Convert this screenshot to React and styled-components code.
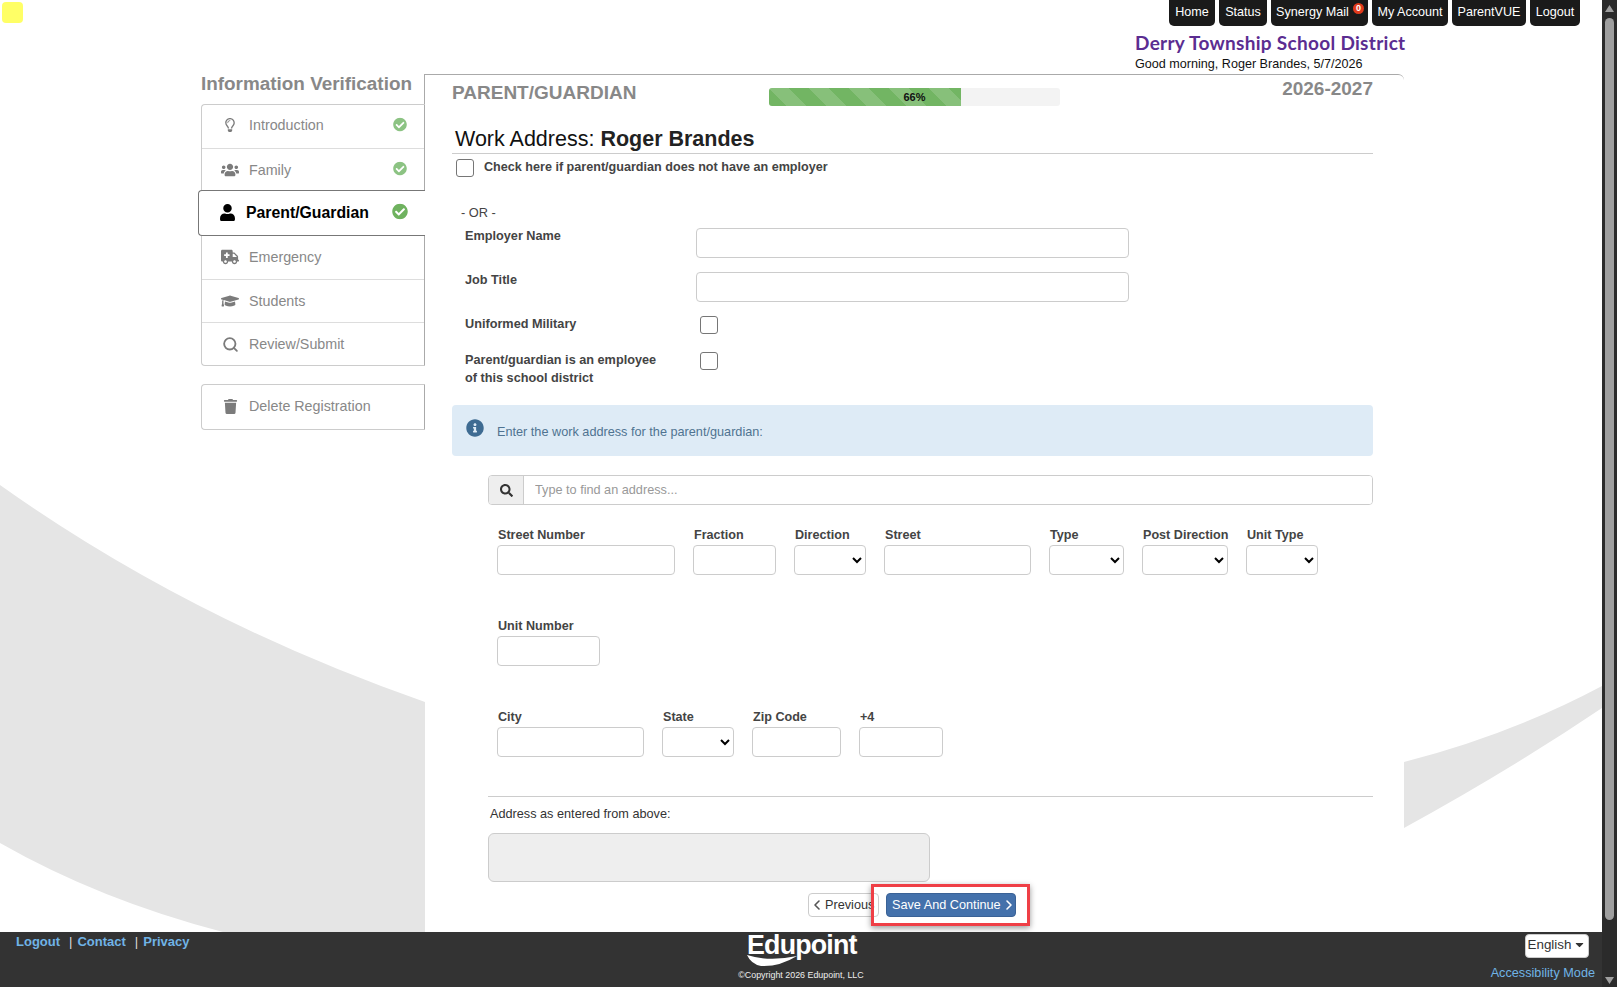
import React from 'react';
import styled, { createGlobalStyle } from 'styled-components';
import {
  FaRegLightbulb,
  FaUsers,
  FaUser,
  FaAmbulance,
  FaGraduationCap,
  FaTrash,
  FaInfoCircle,
  FaCheckCircle,
  FaSearch,
  FaCaretDown,
} from 'react-icons/fa';
import { LuSearch, LuChevronLeft, LuChevronRight } from 'react-icons/lu';

const GlobalStyle = createGlobalStyle`
  html, body {
    margin: 0;
    padding: 0;
    height: 100%;
    overflow: hidden;
    background: #fff;
    font-family: 'Liberation Sans', Arial, sans-serif;
  }
  * { box-sizing: border-box; }
`;

const Shell = styled.div`
  position: relative;
  display: flex;
  width: 1617px;
  height: 987px;
  overflow: hidden;
`;

const Viewport = styled.div`
  position: relative;
  display: flex;
  flex-direction: column;
  width: 1602px;
  height: 987px;
`;

const Swoosh = styled.svg`
  position: absolute;
  inset: 0;
  width: 1602px;
  height: 987px;
`;

const YellowTag = styled.div`
  position: absolute;
  left: 2px;
  top: 2px;
  width: 21px;
  height: 21px;
  background: #ffff66;
  border-radius: 4px;
`;

const TopNav = styled.nav`
  position: relative;
  display: flex;
  justify-content: flex-end;
  gap: 4px;
  height: 26px;
  padding-right: 22px;
`;

const NavButton = styled.a`
  position: relative;
  display: flex;
  align-items: center;
  justify-content: center;
  width: ${(p) => p.$w}px;
  height: 26px;
  padding-bottom: 3px;
  padding-right: ${(p) => (p.$badged ? 14 : 0)}px;
  background: #1a1a1a;
  border-radius: 0 0 5px 5px;
  color: #fff;
  font-size: 12.6px;
`;

const MailBadge = styled.span`
  position: absolute;
  right: 4px;
  top: 3px;
  width: 11px;
  height: 11px;
  border-radius: 50%;
  background: #e03a1c;
  color: #fff;
  font-size: 9px;
  font-weight: bold;
  line-height: 11px;
  text-align: center;
`;

const SchoolBlock = styled.header`
  position: relative;
  height: 48px;
  padding-left: 1135px;
`;

const District = styled.div`
  height: 29px;
  padding-top: 5px;
  color: #5b2d91;
  font-family: 'Lato', 'Liberation Sans', sans-serif;
  font-size: 19px;
  font-weight: 700;
  line-height: 24px;
  letter-spacing: 0.3px;
  white-space: nowrap;
`;

const Greeting = styled.div`
  margin-top: 1px;
  color: #111;
  font-size: 12.6px;
  line-height: 16px;
  white-space: nowrap;
`;

const Workspace = styled.div`
  position: relative;
  display: flex;
  flex: 1;
  padding-left: 201px;
  min-height: 0;
`;

const Sidebar = styled.aside`
  flex: none;
  width: 224px;
`;

const SideTitle = styled.div`
  display: flex;
  align-items: flex-end;
  height: 30px;
  padding-bottom: 11px;
  border-right: 1px solid #aaa;
  color: #888;
  font-size: 18.9px;
  font-weight: bold;
  line-height: 19px;
  white-space: nowrap;
`;

const SideList = styled.div`
  background: #fff;
  border: 1px solid #ccc;
  border-right-color: #aaa;
  border-radius: 4px 0 0 4px;
`;

const SideItem = styled.a`
  position: relative;
  display: flex;
  align-items: center;
  height: ${(p) => p.$h || 43}px;
  padding-left: 17px;
  padding-bottom: ${(p) => p.$lift || 0}px;
  color: #888;
  font-size: 14.3px;
  & + & {
    border-top: 1px solid #ddd;
  }
`;

const ActiveItem = styled.a`
  position: relative;
  display: flex;
  align-items: center;
  height: 46px;
  margin: -1px -1px -1px -4px;
  padding-left: 17px;
  padding-bottom: 1px;
  background: #fff;
  border: 1px solid #777;
  border-right: none;
  border-radius: 4px 0 0 4px;
  color: #000;
  font-size: 15.8px;
  font-weight: bold;
  z-index: 1;
`;

const SideIcon = styled.span`
  display: flex;
  justify-content: center;
  width: 22px;
  margin-right: 8px;
  color: ${(p) => (p.$active ? '#000' : '#7b7b7b')};
  font-size: ${(p) => p.$size || 18}px;
`;

const Done = styled.span`
  position: absolute;
  right: 17px;
  top: 50%;
  display: flex;
  transform: translateY(-60%);
  margin-top: ${(p) => (p.$lifted ? -1 : 0)}px;
  color: ${(p) => (p.$active ? '#6fb25f' : '#8cc383')};
  font-size: ${(p) => (p.$active ? 16 : 14)}px;
`;

const DeleteBox = styled(SideList)`
  margin-top: 18px;
`;

const Panel = styled.main`
  position: relative;
  flex: none;
  width: 979px;
  padding: 0 31px 0 27px;
  background: #fff;
  border-top: 1px solid #aaa;
  border-radius: 0 6px 0 0;
`;

const PanelTop = styled.div`
  display: flex;
  height: 46px;
`;

const StepTitle = styled.h2`
  flex: none;
  width: 317px;
  margin: 6px 0 0;
  color: #888;
  font-size: 19px;
  font-weight: bold;
  line-height: 24px;
`;

const ProgressTrack = styled.div`
  flex: none;
  position: relative;
  width: 291px;
  height: 18px;
  margin-top: 13px;
  background: #f3f3f3;
  border-radius: 3px;
  overflow: hidden;
`;

const ProgressFill = styled.div`
  height: 100%;
  background-color: #72b563;
  background-image: linear-gradient(
    45deg,
    rgba(255, 255, 255, 0.15) 25%,
    transparent 25%,
    transparent 50%,
    rgba(255, 255, 255, 0.15) 50%,
    rgba(255, 255, 255, 0.15) 75%,
    transparent 75%
  );
  background-size: 40px 40px;
`;

const ProgressText = styled.span`
  position: absolute;
  inset: 0;
  color: #111;
  font-size: 11px;
  font-weight: bold;
  line-height: 19px;
  text-align: center;
`;

const Year = styled.div`
  margin: 2px 0 0 auto;
  color: #888;
  font-size: 19px;
  font-weight: bold;
  line-height: 24px;
`;

const Heading = styled.h1`
  height: 33px;
  margin: 0;
  padding: 5px 0 0 3px;
  border-bottom: 1px solid #ccc;
  color: #111;
  font-size: 21.5px;
  font-weight: normal;
  line-height: 26px;
  b { color: #222; }
`;

const Box = styled.input.attrs({ type: 'checkbox' })`
  appearance: none;
  flex: none;
  width: 18px;
  height: 18px;
  margin: 0;
  background: #fff;
  border: 1px solid #767676;
  border-radius: 3px;
`;

const NoEmployer = styled.label`
  display: flex;
  gap: 10px;
  margin-top: 5px;
  padding-left: 4px;
  color: #444;
  font-size: 12.6px;
  font-weight: bold;
  line-height: 16px;
`;

const OrText = styled.div`
  margin-top: 28px;
  padding-left: 9px;
  color: #444;
  font-size: 12.8px;
  line-height: 16px;
`;

const FormRow = styled.div`
  display: grid;
  grid-template-columns: 231px 433px;
  margin-top: ${(p) => p.$top}px;
  padding-left: 13px;
`;

const RowLabel = styled.label`
  color: #444;
  font-size: 12.7px;
  font-weight: bold;
  line-height: 17.5px;
`;

const TextBox = styled.input`
  display: block;
  width: 100%;
  height: 30px;
  background: #fff;
  border: 1px solid #ccc;
  border-radius: 4px;
`;

const CheckCell = styled.div`
  padding-left: 4px;
`;

const Notice = styled.div`
  display: flex;
  height: 51px;
  margin-top: 18px;
  padding: 15px 0 0 14px;
  background: #deebf6;
  border-radius: 4px;
  color: #4f7391;
  font-size: 12.7px;
  line-height: 24px;
  svg {
    margin: -1px 13px 0 0;
    color: #3e6b92;
    font-size: 18px;
  }
`;

const AddressBlock = styled.div`
  padding-left: 36px;
`;

const SearchBar = styled.div`
  display: flex;
  height: 30px;
  margin-top: 19px;
  background: #fff;
  border: 1px solid #ccc;
  border-radius: 4px;
  overflow: hidden;
`;

const SearchAddon = styled.span`
  display: flex;
  flex: none;
  align-items: center;
  justify-content: center;
  width: 35px;
  background: #eee;
  border-right: 1px solid #ccc;
  color: #333;
  font-size: 13px;
`;

const SearchInput = styled.input`
  flex: 1;
  padding: 0 11px;
  border: none;
  outline: none;
  font-family: inherit;
  font-size: 12.7px;
  &::placeholder { color: #999; }
`;

const AddressRow = styled.div`
  display: flex;
  gap: 18px;
  margin-top: ${(p) => p.$top}px;
  padding-left: 9px;
`;

const Field = styled.div`
  display: flex;
  flex-direction: column;
  width: ${(p) => p.$w}px;
`;

const FieldLabel = styled.label`
  height: 18px;
  padding-left: 1px;
  color: #444;
  font-size: 12.6px;
  font-weight: bold;
  line-height: 17px;
  white-space: nowrap;
`;

const SelectBox = styled.select`
  display: block;
  width: 100%;
  height: 30px;
  background: #fff;
  border: 1px solid #ccc;
  border-radius: 4px;
`;

const Rule = styled.hr`
  height: 1px;
  margin: 39px 0 0;
  background: #ccc;
  border: none;
`;

const EnteredLabel = styled.div`
  margin-top: 9px;
  padding-left: 2px;
  color: #333;
  font-size: 12.7px;
  line-height: 16px;
`;

const Entered = styled.div`
  width: 442px;
  height: 49px;
  margin-top: 11px;
  background: #eee;
  border: 1px solid #ccc;
  border-radius: 6px;
`;

const ButtonRow = styled.div`
  position: relative;
  display: flex;
  gap: 7px;
  margin-top: 11px;
  padding-left: 356px;
`;

const PrevButton = styled.a`
  display: flex;
  align-items: center;
  width: 71px;
  height: 24px;
  background: #fff;
  border: 1px solid #ccc;
  border-radius: 4px;
  color: #333;
  font-size: 12.7px;
  white-space: nowrap;
  svg { flex: none; width: 16px; height: 18px; color: #555; }
`;

const SaveButton = styled.a`
  display: flex;
  align-items: center;
  width: 130px;
  height: 24px;
  padding-left: 5px;
  background: #4471ab;
  border: 1px solid #3a6296;
  border-radius: 4px;
  color: #fff;
  font-size: 12.7px;
  white-space: nowrap;
  svg { flex: none; width: 16px; height: 18px; }
`;

const Callout = styled.div`
  position: absolute;
  left: 419px;
  top: -9px;
  width: 159px;
  height: 42px;
  border: 3px solid #ef3f46;
  box-shadow: 0 2px 6px rgba(0, 0, 0, 0.4);
`;

const Footer = styled.footer`
  position: relative;
  display: grid;
  grid-template-columns: 1fr auto 1fr;
  flex: none;
  height: 55px;
  background: #333;
`;

const FooterLinks = styled.div`
  display: flex;
  padding: 1px 0 0 16px;
  color: #ddd;
  font-size: 13px;
  line-height: 17px;
`;

const FooterLink = styled.a`
  color: #70b3e6;
  font-weight: bold;
`;

const Pipe = styled.span`
  margin: 0 5px 0 9px;
`;

const Brand = styled.div`
  display: flex;
  flex-direction: column;
  align-items: center;
`;

const BrandMark = styled.div`
  position: relative;
  width: 108px;
  height: 35px;
  color: #fff;
  font-size: 26.8px;
  font-weight: bold;
  line-height: 27px;
  letter-spacing: -0.8px;
  white-space: nowrap;
  sup {
    position: absolute;
    right: -1px;
    top: 3px;
    font-size: 6px;
    line-height: 6px;
    letter-spacing: 0;
  }
  svg {
    position: absolute;
    left: 0;
    top: 21px;
    width: 50px;
    height: 14px;
  }
`;

const Copyright = styled.div`
  margin-top: 2px;
  color: #eee;
  font-size: 8.9px;
  line-height: 12px;
  white-space: nowrap;
`;

const FooterRight = styled.div`
  display: flex;
  flex-direction: column;
  align-items: flex-end;
  padding: 2px 7px 0 0;
`;

const LangButton = styled.button`
  display: flex;
  align-items: center;
  justify-content: center;
  width: 64px;
  height: 24px;
  margin-right: 6px;
  padding: 0 0 3px;
  background: #fff;
  border: 1px solid #ccc;
  border-radius: 4px;
  color: #333;
  font-family: inherit;
  font-size: 13.4px;
  svg { margin-left: 2px; font-size: 13px; }
`;

const AccessLink = styled.a`
  margin-top: 7px;
  color: #70b3e6;
  font-size: 12.7px;
  line-height: 16px;
  white-space: nowrap;
`;

const ScrollTrack = styled.div`
  position: relative;
  flex: none;
  width: 15px;
  height: 987px;
  background: #2b2b2b;
`;

const ScrollThumb = styled.div`
  position: absolute;
  left: 3px;
  top: 18px;
  width: 9px;
  height: 902px;
  background: #9f9f9f;
  border-radius: 5px;
`;

const ScrollArrow = styled.svg`
  position: absolute;
  left: 3px;
  ${(p) => (p.$down ? 'bottom: 3px;' : 'top: 5px;')}
  width: 9px;
  height: 7px;
`;

const navItems = [
  ['Home', 46],
  ['Status', 48],
  ['Synergy Mail', 97],
  ['My Account', 76],
  ['ParentVUE', 74],
  ['Logout', 50],
];

const App = () => {
  return (
    <>
      <GlobalStyle />
      <Shell>
        <Viewport>
          <Swoosh viewBox="0 0 1602 987">
            <path d="M0 485 Q190 620 425 702 L425 932 L223 932 Q100 900 0 843 Z" fill="#e5e5e5" />
            <path d="M1404 762 Q1510 735 1602 686 L1602 708 Q1510 770 1404 828 Z" fill="#e5e5e5" />
          </Swoosh>
          <YellowTag />
          <TopNav>
            {navItems.map(([label, w]) => (
              <NavButton key={label} $w={w} $badged={label === 'Synergy Mail'}>
                {label}
                {label === 'Synergy Mail' && <MailBadge>0</MailBadge>}
              </NavButton>
            ))}
          </TopNav>
          <SchoolBlock>
            <District>Derry Township School District</District>
            <Greeting>Good morning, Roger Brandes, 5/7/2026</Greeting>
          </SchoolBlock>
          <Workspace>
            <Sidebar>
              <SideTitle>Information Verification</SideTitle>
              <SideList>
                <SideItem $lift={3}>
                  <SideIcon $size={14}><FaRegLightbulb /></SideIcon>
                  Introduction
                  <Done $lifted><FaCheckCircle /></Done>
                </SideItem>
                <SideItem $lift={1}>
                  <SideIcon><FaUsers /></SideIcon>
                  Family
                  <Done><FaCheckCircle /></Done>
                </SideItem>
                <ActiveItem>
                  <SideIcon $active $size={17}><FaUser /></SideIcon>
                  Parent/Guardian
                  <Done $active><FaCheckCircle /></Done>
                </ActiveItem>
                <SideItem $h={44}>
                  <SideIcon><FaAmbulance /></SideIcon>
                  Emergency
                </SideItem>
                <SideItem>
                  <SideIcon><FaGraduationCap /></SideIcon>
                  Students
                </SideItem>
                <SideItem>
                  <SideIcon $size={17}><LuSearch strokeWidth={2.6} /></SideIcon>
                  Review/Submit
                </SideItem>
              </SideList>
              <DeleteBox>
                <SideItem $h={44} $lift={2}>
                  <SideIcon $size={15}><FaTrash /></SideIcon>
                  Delete Registration
                </SideItem>
              </DeleteBox>
            </Sidebar>
            <Panel>
              <PanelTop>
                <StepTitle>PARENT/GUARDIAN</StepTitle>
                <ProgressTrack>
                  <ProgressFill style={{ width: `${(192 / 291) * 100}%` }} />
                  <ProgressText>66%</ProgressText>
                </ProgressTrack>
                <Year>2026-2027</Year>
              </PanelTop>
              <Heading>Work Address: <b>Roger Brandes</b></Heading>
              <NoEmployer>
                <Box />
                Check here if parent/guardian does not have an employer
              </NoEmployer>
              <OrText>- OR -</OrText>
              <FormRow $top={7}>
                <RowLabel>Employer Name</RowLabel>
                <TextBox />
              </FormRow>
              <FormRow $top={14}>
                <RowLabel>Job Title</RowLabel>
                <TextBox />
              </FormRow>
              <FormRow $top={14}>
                <RowLabel>Uniformed Military</RowLabel>
                <CheckCell><Box /></CheckCell>
              </FormRow>
              <FormRow $top={14}>
                <RowLabel>Parent/guardian is an employee<br />of this school district</RowLabel>
                <CheckCell><Box /></CheckCell>
              </FormRow>
              <Notice>
                <FaInfoCircle />
                Enter the work address for the parent/guardian:
              </Notice>
              <AddressBlock>
                <SearchBar>
                  <SearchAddon><FaSearch /></SearchAddon>
                  <SearchInput placeholder="Type to find an address..." />
                </SearchBar>
                <AddressRow $top={22}>
                  <Field $w={178}><FieldLabel>Street Number</FieldLabel><TextBox /></Field>
                  <Field $w={83}><FieldLabel>Fraction</FieldLabel><TextBox /></Field>
                  <Field $w={72}><FieldLabel>Direction</FieldLabel><SelectBox /></Field>
                  <Field $w={147}><FieldLabel>Street</FieldLabel><TextBox /></Field>
                  <Field $w={75}><FieldLabel>Type</FieldLabel><SelectBox /></Field>
                  <Field $w={86}><FieldLabel>Post Direction</FieldLabel><SelectBox /></Field>
                  <Field $w={72}><FieldLabel>Unit Type</FieldLabel><SelectBox /></Field>
                </AddressRow>
                <AddressRow $top={43}>
                  <Field $w={103}><FieldLabel>Unit Number</FieldLabel><TextBox /></Field>
                </AddressRow>
                <AddressRow $top={43}>
                  <Field $w={147}><FieldLabel>City</FieldLabel><TextBox /></Field>
                  <Field $w={72}><FieldLabel>State</FieldLabel><SelectBox /></Field>
                  <Field $w={89}><FieldLabel>Zip Code</FieldLabel><TextBox /></Field>
                  <Field $w={84}><FieldLabel>+4</FieldLabel><TextBox /></Field>
                </AddressRow>
                <Rule />
                <EnteredLabel>Address as entered from above:</EnteredLabel>
                <Entered />
              </AddressBlock>
              <ButtonRow>
                <PrevButton><LuChevronLeft strokeWidth={2.4} />Previous</PrevButton>
                <SaveButton>Save And Continue<LuChevronRight strokeWidth={2.4} /></SaveButton>
                <Callout />
              </ButtonRow>
            </Panel>
          </Workspace>
          <Footer>
            <FooterLinks>
              <FooterLink>Logout</FooterLink>
              <Pipe>|</Pipe>
              <FooterLink>Contact</FooterLink>
              <Pipe>|</Pipe>
              <FooterLink>Privacy</FooterLink>
            </FooterLinks>
            <Brand>
              <BrandMark>
                Edupoint<sup>®</sup>
                <svg viewBox="0 0 50 14">
                  <path d="M0 2 Q22 9 50 3 Q32 14 14 13 Q4 11 0 2 Z" fill="#fff" />
                </svg>
              </BrandMark>
              <Copyright>©Copyright 2026 Edupoint, LLC</Copyright>
            </Brand>
            <FooterRight>
              <LangButton>English<FaCaretDown /></LangButton>
              <AccessLink>Accessibility Mode</AccessLink>
            </FooterRight>
          </Footer>
        </Viewport>
        <ScrollTrack>
          <ScrollArrow viewBox="0 0 9 7"><path d="M4.5 0 L9 7 L0 7 Z" fill="#9f9f9f" /></ScrollArrow>
          <ScrollThumb />
          <ScrollArrow $down viewBox="0 0 9 7"><path d="M0 0 L9 0 L4.5 7 Z" fill="#9f9f9f" /></ScrollArrow>
        </ScrollTrack>
      </Shell>
    </>
  );
};

export default App;
